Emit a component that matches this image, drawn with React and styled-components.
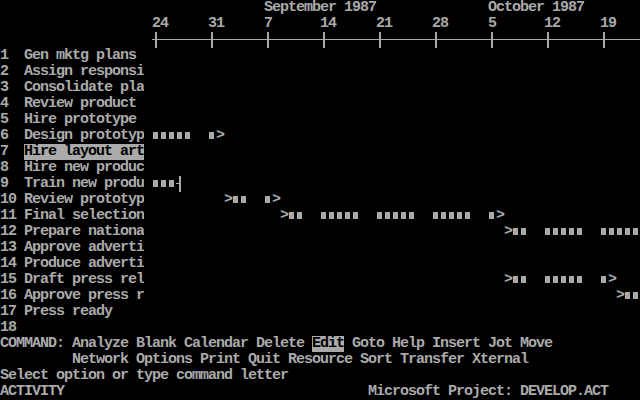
import React from "react";
import styled, { createGlobalStyle } from "styled-components";

const FG = "#aaaaaa";

const Global = createGlobalStyle`
  html, body { margin: 0; padding: 0; background: #000; }
  #root { width: 640px; height: 400px; }
`;

const Screen = styled.div`
  width: 640px;
  height: 400px;
  background: #000;
  color: ${FG};
  font-family: "Liberation Mono", "DejaVu Sans Mono", monospace;
  font-weight: bold;
  font-size: 15px;
  letter-spacing: -1px;
  line-height: 16px;
  overflow: hidden;
  display: flex;
  flex-direction: column;
`;

const Line = styled.div`
  height: 16px;
  white-space: pre;
  display: flex;
`;

const Text = styled.span`
  white-space: pre;
  background: ${(p) => (p.$inv ? FG : "transparent")};
  color: ${(p) => (p.$inv ? "#000" : "inherit")};
`;

const Axis = styled.div`
  height: 16px;
  margin-left: 152px;
  display: flex;
`;

const Week = styled.div`
  width: 56px;
  flex: ${(p) => (p.$last ? "1" : "none")};
  height: 16px;
  display: flex;
  background: linear-gradient(
    to bottom,
    transparent 7px,
    ${FG} 7px,
    ${FG} 8px,
    transparent 8px
  );
`;

const Tick = styled.span`
  width: 2px;
  height: 16px;
  margin-left: 3px;
  background: ${FG};
`;

const TaskRow = styled.div`
  height: 16px;
  display: flex;
`;

const Num = styled.span`
  width: 24px;
  white-space: pre;
`;

const Name = styled.span`
  width: 120px;
  white-space: pre;
  overflow: hidden;
  background: ${(p) => (p.$sel ? FG : "transparent")};
  color: ${(p) => (p.$sel ? "#000" : "inherit")};
`;

const Gantt = styled.div`
  margin-left: 8px;
  display: flex;
`;

const Cell = styled.span`
  width: 8px;
  height: 16px;
  display: flex;
  align-items: flex-start;
  white-space: pre;
`;

const Square = styled.span`
  width: 5px;
  height: 7px;
  margin: 4px 0 0 1px;
  background: ${FG};
`;

const Dash = styled.span`
  width: 3px;
  height: 1px;
  margin-top: 7px;
  background: ${FG};
`;

const Bar = styled.span`
  width: 2px;
  height: 16px;
  background: ${FG};
`;

const pad = (s, col) => s + " ".repeat(Math.max(0, col - s.length));

const monthLine = pad(pad("", 33) + "September 1987", 61) + "October 1987";
const dateLine = (() => {
  const d = ["24", "31", "7", "14", "21", "28", "5", "12", "19"];
  let s = "";
  d.forEach((x, i) => {
    s = pad(s, 19 + i * 7) + x;
  });
  return s;
})();

const tasks = [
  ["1", "Gen mktg plans", ""],
  ["2", "Assign responsi", ""],
  ["3", "Consolidate pla", ""],
  ["4", "Review product", ""],
  ["5", "Hire prototype", ""],
  ["6", "Design prototyp", "■■■■■  ■>"],
  ["7", "Hire layout art", "", true],
  ["8", "Hire new produc", ""],
  ["9", "Train new produ", "■■■|"],
  ["10", "Review prototyp", " ".repeat(9) + ">■■  ■>"],
  ["11", "Final selection", " ".repeat(16) + ">■■  ■■■■■  ■■■■■  ■■■■■  ■>"],
  ["12", "Prepare nationa", " ".repeat(44) + ">■■  ■■■■■  ■■■■■"],
  ["13", "Approve adverti", ""],
  ["14", "Produce adverti", ""],
  ["15", "Draft press rel", " ".repeat(44) + ">■■  ■■■■■  ■>"],
  ["16", "Approve press r", " ".repeat(58) + ">■■"],
  ["17", "Press ready", ""],
  ["18", "", ""],
];

function GanttCell({ c }) {
  if (c === "■")
    return (
      <Cell>
        <Square />
      </Cell>
    );
  if (c === "|")
    return (
      <Cell>
        <Dash />
        <Bar />
      </Cell>
    );
  return <Cell>{c}</Cell>;
}

export default function App() {
  return (
    <>
      <Global />
      <Screen>
        <Line>
          <Text>{monthLine}</Text>
        </Line>
        <Line>
          <Text>{dateLine}</Text>
        </Line>
        <Axis>
          {Array.from({ length: 9 }).map((_, i) => (
            <Week key={i} $last={i === 8}>
              <Tick />
            </Week>
          ))}
        </Axis>
        {tasks.map(([n, name, bars, sel]) => (
          <TaskRow key={n}>
            <Num>{n}</Num>
            <Name $sel={sel}>{name}</Name>
            <Gantt>
              {Array.from(bars).map((c, i) => (
                <GanttCell key={i} c={c} />
              ))}
            </Gantt>
          </TaskRow>
        ))}
        <Line>
          <Text>COMMAND: Analyze Blank Calendar Delete </Text>
          <Text $inv>Edit</Text>
          <Text> Goto Help Insert Jot Move</Text>
        </Line>
        <Line>
          <Text>{"         Network Options Print Quit Resource Sort Transfer Xternal"}</Text>
        </Line>
        <Line>
          <Text>Select option or type command letter</Text>
        </Line>
        <Line>
          <Text>{pad("ACTIVITY", 46) + "Microsoft Project: DEVELOP.ACT"}</Text>
        </Line>
      </Screen>
    </>
  );
}
